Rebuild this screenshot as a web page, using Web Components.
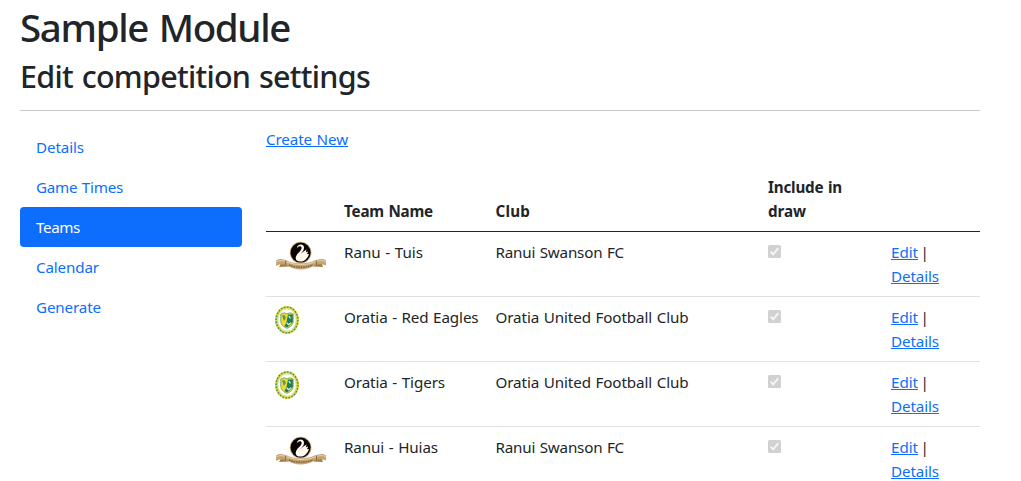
<!DOCTYPE html>
<html lang="en">
<head>
<meta charset="utf-8">
<title>Sample Module</title>
<style>
html,body{margin:0;background:#fff;overflow:hidden}
body{font:400 15.2px/24px "Noto Sans","Open Sans",sans-serif;color:#212529}
</style>
</head>
<body>
<competition-page></competition-page>
<script>
const mount = (el, html) => { el.attachShadow({mode:'open'}).innerHTML = html; };

// Text whose tracking is adjusted to a given advance width.
customElements.define('fit-text', class extends HTMLElement {
  connectedCallback(){
    if(this.shadowRoot) return;
    mount(this, `<style>:host{display:inline-block;white-space:pre;word-spacing:.05em}</style><slot></slot>`);
    const w = parseFloat(this.getAttribute('w'));
    const n = this.textContent.length;
    this.style.letterSpacing = ((w - this.getBoundingClientRect().width) / n) + 'px';
    this.style.width = w + 'px';
  }
});

customElements.define('text-link', class extends HTMLElement {
  connectedCallback(){
    mount(this, `<style>:host{display:inline-block;color:#0d6efd;height:24px}
      a{display:block;color:inherit;height:19px;line-height:24px;border-bottom:1px solid #0d6efd;cursor:pointer}</style>
      <a><slot></slot></a>`);
  }
});

customElements.define('nav-pill', class extends HTMLElement {
  connectedCallback(){
    mount(this, `<style>:host{display:block;box-sizing:border-box;height:40px;padding:8px 16px;border-radius:4px;color:#0d6efd}
      :host([active]){background:#0d6efd;color:#fff}</style><slot></slot>`);
  }
});

customElements.define('check-mark', class extends HTMLElement {
  connectedCallback(){
    mount(this, `<style>:host{display:block;width:13px;height:13px;margin-top:5px}svg{display:block}</style>
      <svg width="13" height="13"><rect width="13" height="13" rx="1.5" fill="#d1d1d1"/><path d="M2.7 6.8 5.2 9.3 10.3 3.2" fill="none" stroke="#f5f5f5" stroke-width="2"/></svg>`);
  }
});

const swan = `<svg width="54" height="32" viewBox="6 5 54 32">
  <path d="M9 26.5 18 25.5 21 31.5 11 32 12.5 29.5Z M57 26.5 48 25.5 45 31.5 55 32 54 29.5Z" fill="#a17f4c"/>
  <circle cx="32.6" cy="17.6" r="10.8" fill="#c9a876"/><circle cx="32.6" cy="17.6" r="10" fill="#080504"/>
  <path d="M28.8 13.6C29 8.4 36.4 8.2 36 13.2 35.7 16.6 31.6 19 30.6 22c1.4-3.4 4.6-5.6 8-7.6l-.8 2.8 2.4-.6-1.2 2.4 2 .2c-1.2 3.6-4.2 7.2-8.4 7.4-4 .2-5.6-2.4-4.6-5.2 1.2-3.4 5.4-5.2 5.6-8.4.1-2.6-3.4-2.4-4.8.6Z" fill="#fffaf0"/>
  <path d="M8.3 25.2C12 23 16 24.6 20.5 26.2 28 29 37 29 45 26.2 49.5 24.6 54 23 57.8 25.2L58 30.6C53 28.6 50 29.2 46 30.8 38 35.8 27 35.8 20 30.8 16 28.8 12 28.6 8 31Z" fill="#c5a273"/>
  <path d="M9 26.5C13 24.6 16 26 20 27.4 28 30.2 38 30.2 46 27.4 50 26 54 24.6 57 26.5" fill="none" stroke="#ead4ad" stroke-width="1"/>
  <path d="M21 30C28 33 37 33 45 30" fill="none" stroke="#7c633c" stroke-width="1.4" stroke-dasharray="1.6 .8"/>
  <path d="M17.5 26v4M48.5 26v4" stroke="#8b6a39" stroke-width="1"/></svg>`;
const crest = `<svg width="26" height="30" viewBox="6 5 26 30">
  <ellipse cx="19" cy="20" rx="10.7" ry="12.7" fill="#fff" stroke="#dcd53c" stroke-width="2.6"/>
  <ellipse cx="19" cy="20" rx="10.9" ry="12.9" fill="none" stroke="#3b9048" stroke-width="1.3" stroke-dasharray="1.6 1.5"/>
  <ellipse cx="19" cy="20" rx="9.1" ry="11" fill="#fff" stroke="#a9c67c" stroke-width=".5"/>
  <path d="M12.8 14 16 12.8 19 13.8 22 12.8 25.2 14V21C25.2 25 22 27.3 19 28.3 16 27.3 12.8 25 12.8 21Z" fill="#f5d92f" stroke="#5b9a6c" stroke-width=".8"/>
  <path d="M20 14.5h4.8V22L21 26l-2 1.5-2.5-1.5 2-4Z" fill="#1f7e58"/>
  <path d="M14 15.5l2.5-.6 1.5 3-2 3Z" fill="#579f4b"/>
  <path d="M20.8 16l1.7 2.4M18.6 22.8l2 1.8 2.4-2" fill="none" stroke="#e9f3e6" stroke-width="1.2"/></svg>`;
customElements.define('club-logo', class extends HTMLElement {
  connectedCallback(){
    mount(this, `<style>:host{display:block;height:32px}svg{display:block}</style>${this.getAttribute('kind')==='swan'?swan:crest}`);
  }
});

customElements.define('team-row', class extends HTMLElement {
  connectedCallback(){
    const a = k => this.getAttribute(k);
    mount(this, `<style>:host{display:grid;grid-template-columns:70px 151.5px 272.5px 123px 97px;height:65px;box-sizing:border-box;border-bottom:1px solid #dee2e6}
      .c{padding:8px 0 0 8px}.actions{word-spacing:-.1em}</style>
      <div class="c"><club-logo kind="${a('logo')}"></club-logo></div>
      <div class="c"><fit-text w="${a('nw')}">${a('name')}</fit-text></div>
      <div class="c"><fit-text w="${a('cw')}">${a('club')}</fit-text></div>
      <div class="c"><check-mark></check-mark></div>
      <div class="c actions"><text-link><fit-text w="27">Edit</fit-text></text-link> |<br><text-link><fit-text w="48">Details</fit-text></text-link></div>`);
  }
});

customElements.define('team-table', class extends HTMLElement {
  connectedCallback(){
    mount(this, `<style>:host{display:block;width:714px}
      .head{display:grid;grid-template-columns:70px 151.5px 272.5px 123px 97px;height:65px;box-sizing:border-box;border-bottom:1px solid #212529;align-items:end;font-weight:700}
      .head div{padding:0 0 8px 8px}</style>
      <div class="head"><div></div><div><fit-text w="89">Team Name</fit-text></div><div><fit-text w="34.5">Club</fit-text></div><div><fit-text w="74">Include in</fit-text><br><fit-text w="38">draw</fit-text></div><div></div></div>
      <team-row logo="swan" name="Ranu - Tuis" nw="79" club="Ranui Swanson FC" cw="128.5"></team-row>
      <team-row logo="crest" name="Oratia - Red Eagles" nw="134.5" club="Oratia United Football Club" cw="193"></team-row>
      <team-row logo="crest" name="Oratia - Tigers" nw="101" club="Oratia United Football Club" cw="193"></team-row>
      <team-row logo="swan" name="Ranui - Huias" nw="94" club="Ranui Swanson FC" cw="128.5"></team-row>`);
  }
});

customElements.define('competition-page', class extends HTMLElement {
  connectedCallback(){
    mount(this, `<style>:host{display:block;height:481px;overflow:hidden;padding:3px 0 0 20px;box-sizing:border-box}
      h1,h2{margin:0;font-weight:500}
      h1{font-size:38.5px;line-height:48px;height:54px}
      h2{font-size:30.5px;line-height:38px;height:53px}
      .rule{width:960px;height:1px;background:#c8c9ca;margin-bottom:16px}
      .cols{display:grid;grid-template-columns:222px 714px;column-gap:24px}
      .create{height:40px}</style>
      <h1><fit-text w="270">Sample Module</fit-text></h1>
      <h2><fit-text w="350">Edit competition settings</fit-text></h2>
      <div class="rule"></div>
      <div class="cols"><nav>
        <nav-pill><fit-text w="48">Details</fit-text></nav-pill>
        <nav-pill><fit-text w="87">Game Times</fit-text></nav-pill>
        <nav-pill active><fit-text w="44">Teams</fit-text></nav-pill>
        <nav-pill><fit-text w="63">Calendar</fit-text></nav-pill>
        <nav-pill><fit-text w="65">Generate</fit-text></nav-pill>
      </nav><main><div class="create"><text-link><fit-text w="82">Create New</fit-text></text-link></div>
      <team-table></team-table></main></div>`);
  }
});
</script>
</body>
</html>
